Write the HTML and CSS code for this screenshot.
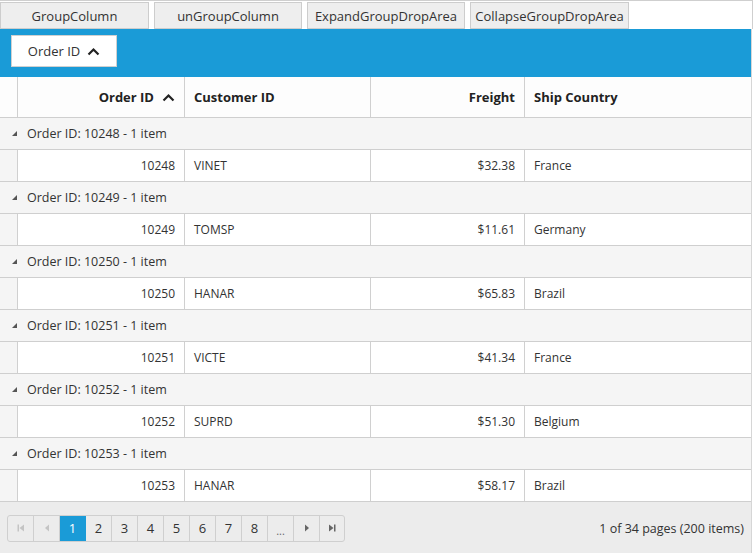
FILE: index.html
```html
<!DOCTYPE html>
<html>
<head>
<meta charset="utf-8">
<link rel="stylesheet" href="styles.css">
</head>
<body>
<div class="page">
  <div class="toolbar">
    <button class="btn b1">GroupColumn</button>
    <button class="btn b2">unGroupColumn</button>
    <button class="btn b3">ExpandGroupDropArea</button>
    <button class="btn b4">CollapseGroupDropArea</button>
  </div>
  <div class="grid">
    <div class="droparea">
      <div class="chip">Order ID <svg class="chev" width="13" height="9" viewBox="0 0 13 9"><path d="M1.5 7.5 L6.5 2.5 L11.5 7.5" fill="none" stroke="#222" stroke-width="2.2"/></svg></div>
    </div>
    <div class="row header">
      <div class="indent"></div>
      <div class="cell c1 right bold">Order ID <svg class="chev" width="13" height="9" viewBox="0 0 13 9"><path d="M1.5 7.5 L6.5 2.5 L11.5 7.5" fill="none" stroke="#222" stroke-width="2.2"/></svg></div>
      <div class="cell c2 bold">Customer ID</div>
      <div class="cell c3 right bold">Freight</div>
      <div class="cell c4 bold">Ship Country</div>
    </div>

    <div class="caption"><span class="tri"></span>Order ID: 10248 - 1 item</div>
    <div class="row data"><div class="indent"></div><div class="cell c1 right">10248</div><div class="cell c2">VINET</div><div class="cell c3 right">$32.38</div><div class="cell c4">France</div></div>

    <div class="caption"><span class="tri"></span>Order ID: 10249 - 1 item</div>
    <div class="row data"><div class="indent"></div><div class="cell c1 right">10249</div><div class="cell c2">TOMSP</div><div class="cell c3 right">$11.61</div><div class="cell c4">Germany</div></div>

    <div class="caption"><span class="tri"></span>Order ID: 10250 - 1 item</div>
    <div class="row data"><div class="indent"></div><div class="cell c1 right">10250</div><div class="cell c2">HANAR</div><div class="cell c3 right">$65.83</div><div class="cell c4">Brazil</div></div>

    <div class="caption"><span class="tri"></span>Order ID: 10251 - 1 item</div>
    <div class="row data"><div class="indent"></div><div class="cell c1 right">10251</div><div class="cell c2">VICTE</div><div class="cell c3 right">$41.34</div><div class="cell c4">France</div></div>

    <div class="caption"><span class="tri"></span>Order ID: 10252 - 1 item</div>
    <div class="row data"><div class="indent"></div><div class="cell c1 right">10252</div><div class="cell c2">SUPRD</div><div class="cell c3 right">$51.30</div><div class="cell c4">Belgium</div></div>

    <div class="caption"><span class="tri"></span>Order ID: 10253 - 1 item</div>
    <div class="row data"><div class="indent"></div><div class="cell c1 right">10253</div><div class="cell c2">HANAR</div><div class="cell c3 right">$58.17</div><div class="cell c4">Brazil</div></div>

    <div class="pager">
      <div class="pages">
        <div class="pg dis"><svg width="8" height="8" viewBox="0 0 8 8"><rect x="0.5" y="0.5" width="1.5" height="7" fill="#c4c4c4"/><path d="M7 0.5 L2.5 4 L7 7.5Z" fill="#c4c4c4"/></svg></div>
        <div class="pg dis"><svg width="6" height="8" viewBox="0 0 6 8"><path d="M5 0.5 L1 4 L5 7.5Z" fill="#c4c4c4"/></svg></div>
        <div class="pg active">1</div>
        <div class="pg">2</div>
        <div class="pg">3</div>
        <div class="pg">4</div>
        <div class="pg">5</div>
        <div class="pg">6</div>
        <div class="pg">7</div>
        <div class="pg">8</div>
        <div class="pg dots">...</div>
        <div class="pg"><svg width="6" height="8" viewBox="0 0 6 8"><path d="M1 0.5 L5 4 L1 7.5Z" fill="#666"/></svg></div>
        <div class="pg"><svg width="8" height="8" viewBox="0 0 8 8"><path d="M1 0.5 L5.5 4 L1 7.5Z" fill="#666"/><rect x="6" y="0.5" width="1.5" height="7" fill="#666"/></svg></div>
      </div>
      <div class="info">1 of 34 pages (200 items)</div>
    </div>
  </div>
</div>
</body>
</html>
```

FILE: styles.css
```css
* { box-sizing: border-box; }
html, body { margin: 0; padding: 0; background: #fff; }
body {
  font-family: "Open Sans", "Noto Sans", sans-serif;
  font-size: 12px;
  color: #333;
}
.page {
  width: 753px;
  border-top: 1px solid #cfcfcf;
}
.toolbar {
  display: flex;
  gap: 5px;
  height: 28px;
  padding-top: 1px;
  border-right: 1px solid #cfcfcf;
}
.btn {
  height: 27px;
  background: #eeeeee;
  border: 1px solid #cdcdcd;
  font-family: inherit;
  font-size: 13px;
  color: #333;
  padding: 0;
  margin: 0;
}
.b1 { width: 149px; }
.b2 { width: 148px; }
.b3 { width: 158px; }
.b4 { width: 159px; }
.grid {
  width: 752px;
  border-right: 1px solid #d6d6d6;
}
.droparea {
  background: #1a9bd7;
  height: 48px;
  padding: 6px 0 0 11px;
}
.chip {
  width: 106px;
  height: 32px;
  background: #fff;
  border: 1px solid #d0d0d0;
  display: flex;
  align-items: center;
  justify-content: center;
  gap: 7px;
  font-size: 13px;
  color: #333;
}
.chev { display: block; }
.row {
  display: flex;
  height: 32px;
  border-bottom: 1px solid #cfcfcf;
}
.row.header {
  height: 41px;
  background: #fdfdfd;
}
.indent {
  width: 18px;
  flex: none;
  border-right: 1px solid #d0d0d0;
}
.row.data .indent { background: #f5f5f5; }
.cell {
  display: flex;
  align-items: center;
  padding: 0 9px;
  border-right: 1px solid #d0d0d0;
  font-size: 12px;
  flex: none;
}
.cell.right { justify-content: flex-end; }
.bold { font-weight: 700; font-size: 13px; color: #222; gap: 8px; }
.c1 { width: 167px; }
.c2 { width: 186px; }
.c3 { width: 154px; }
.c4 { width: 226px; border-right: none; }
.row.data { background: #fff; }
.caption {
  height: 32px;
  background: #f5f5f5;
  border-bottom: 1px solid #cfcfcf;
  display: flex;
  align-items: center;
  padding-left: 12px;
  font-size: 12.5px;
  color: #333;
}
.tri {
  width: 0; height: 0;
  border-left: 5px solid transparent;
  border-bottom: 5px solid #555;
  margin-right: 10px;
}
.pager {
  height: 52px;
  background: #ececec;
  display: flex;
  align-items: center;
  justify-content: space-between;
  padding: 0 7px 0 7px;
}
.pages {
  display: flex;
  border: 1px solid #cfcfcf;
  border-radius: 3px;
  overflow: hidden;
  height: 27px;
}
.pg {
  width: 26px;
  display: flex;
  align-items: center;
  justify-content: center;
  border-right: 1px solid #cfcfcf;
  font-size: 13px;
  color: #333;
}
.pg:last-child { border-right: none; width: 24px; }
.pg.active { background: #1a9bd7; color: #fff; border-right-color: #1a9bd7; }
.pg.dots { font-size: 11px; color: #666; padding-top: 4px; }
.info { font-size: 12.5px; color: #333; }
```
